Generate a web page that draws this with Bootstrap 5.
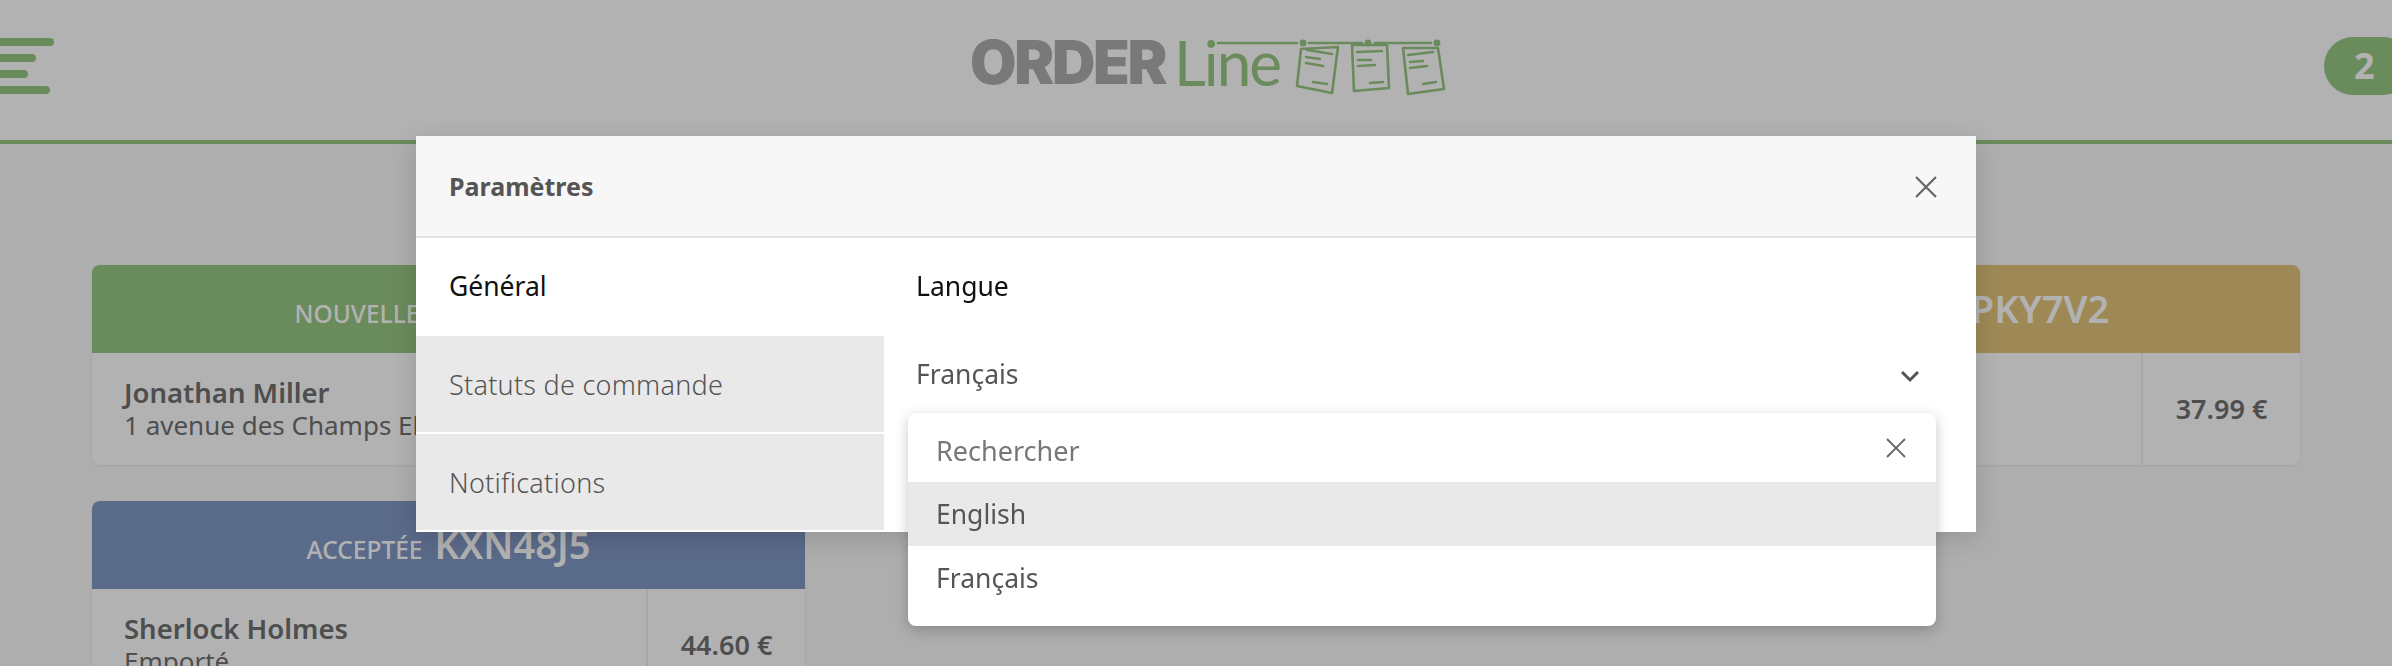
<!doctype html>
<html lang="fr">
<head>
<meta charset="utf-8">
<title>OrderLine</title>
<link rel="stylesheet" href="https://cdn.jsdelivr.net/npm/bootstrap@5.3.0/dist/css/bootstrap.min.css">
<style>
html,body{height:666px;overflow:hidden}
body{background:#fafafa;font-family:"Noto Sans","Open Sans",sans-serif;font-size:26px;color:#707070}
.top-bar{height:144px;background:#fff;border-bottom:4px solid #99c784;position:relative}
.burger{width:54px;padding-top:38px;gap:8px}
.burger span{display:block;height:8px;background:#99c784;border-radius:0 4px 4px 0}
.burger .b1{width:54px}.burger .b2{width:36px}.burger .b3{width:28px}.burger .b4{width:50px}
.brand{position:absolute;left:970px;top:24px;height:76px;white-space:nowrap}
.brand-a{font-family:Inter,sans-serif;font-weight:900;font-size:60px;letter-spacing:-2.3px;color:#aeaeae;line-height:76px;width:204px}
.brand-b{font-family:Lato,sans-serif;font-weight:400;font-size:62px;color:#99c784;line-height:76px;letter-spacing:-2px}
.brand svg{position:absolute;left:235px;top:11px}
.count-pill{position:absolute;right:-20px;top:37px;width:88px;height:58px;border-radius:29px;background:#99c784;color:#fff;font-weight:700;font-size:36px;line-height:58px;padding-left:30px}
.board{padding:121px 92px 0;gap:34.5px}
.board-col{flex:1 1 0;min-width:0;gap:36px}
.order{border-radius:8px;background:#fff;box-shadow:0 1px 3px rgba(0,0,0,.08);overflow:hidden}
.order-head{height:88px;color:#fff}
.order-head>div{gap:12px;font-weight:500;font-size:24.5px}
.order-head b{font-size:38px;font-weight:600;line-height:44px}
.head-green{background:#99c784}.head-blue{background:#8199c5}.head-gold{background:#e2c57c}
.head-gold span{letter-spacing:-1.6px}
.order-info{flex:1;padding:24px 32px;line-height:32px;min-width:0;white-space:nowrap;overflow:hidden;font-size:26px}
.order-info strong{font-weight:600;display:block;font-size:27.5px}
.order-price{width:159px;border-left:2px solid #f0f0f0;font-weight:600;font-size:27px}
.dim{background:rgba(0,0,0,.3);z-index:1040;opacity:1}
.dlg{position:absolute;left:416px;top:136px;width:1560px;z-index:1050;background:#fff;box-shadow:0 6px 24px rgba(0,0,0,.15)}
.dlg-head{height:102px;background:#f7f7f7;border-bottom:2px solid #e2e2e2;padding:2px 34px 0 33px;color:#555;font-weight:700;font-size:25px}
.x-btn{width:32px;height:32px;color:#666}
.tabs{width:468px}
.tab-item{height:98px;padding:2px 33px 0;font-size:27px;letter-spacing:.25px;color:#555;background:#e9e9e9;font-weight:300;border-bottom:2px solid #fff}
.tab-item.on{background:#fff;color:#111;font-weight:400;font-size:26.5px;letter-spacing:0}
.pane{flex:1;position:relative;height:294px;padding:0 32px}
.pane-title{height:98px;color:#111;font-size:26.5px}
.pane-sel{height:78px;margin-right:21px;color:#555;font-size:26.5px}
.pane-sel svg{margin-top:4px}
.lang-menu{position:absolute;left:24px;top:175px;right:40px;height:213px;background:#fff;border-radius:8px;box-shadow:0 4px 14px rgba(0,0,0,.22);border:0;margin:0;padding:0;display:block}
.lang-search{height:69px;padding:0 28px 0 28px;color:#777;font-size:27px}
.lang-search span{padding-top:7px}
.lang-item{height:64px;padding:2px 28px 0;color:#555;font-size:26.5px}
.lang-item.hov{background:#e9e9e9}
</style>
</head>
<body>
<header class="top-bar">
  <div class="burger d-flex flex-column"><span class="b1"></span><span class="b2"></span><span class="b3"></span><span class="b4"></span></div>
  <div class="brand d-flex">
    <span class="brand-a">ORDER</span><span class="brand-b">Line</span>
    <svg width="245" height="65" viewBox="1205 35 245 65" fill="none" stroke="#99c784" stroke-width="2.6" stroke-linecap="round" stroke-linejoin="round">
      <g fill="#99c784" stroke="none"><circle cx="1303" cy="43" r="3.4"/><circle cx="1368" cy="43" r="3.4"/><circle cx="1437" cy="43" r="3.4"/></g>
      <path d="M1218 43H1297M1309 43H1362M1375 43H1431"/>
      <path d="M1301 49 1338 47 1332 93 1297 86Z"/>
      <path d="M1352 45 1387 45 1389 88 1354 91Z"/>
      <path d="M1403 48 1438 48 1444 89 1408 94Z"/>
      <path d="M1307 50 1332 54M1306 57 1320 59M1306 63 1323 66M1313 82 1327 84"/>
      <path d="M1357 52 1382 51M1358 60 1371 60M1358 66 1375 65M1370 83 1383 82"/>
      <path d="M1408 55 1433 52M1410 62 1423 61M1410 68 1427 66M1423 84 1436 82"/>
    </svg>
  </div>
  <div class="count-pill">2</div>
</header>

<main class="board d-flex">
  <div class="board-col d-flex flex-column">
    <section class="order">
      <div class="order-head head-green d-flex justify-content-center align-items-center"><div class="d-flex align-items-baseline"><span>NOUVELLE</span><b>R3TN8QZ</b></div></div>
      <div class="d-flex"><div class="order-info"><strong>Jonathan Miller</strong>1 avenue des Champs Elysées</div><div class="order-price d-flex align-items-center justify-content-center">29.50 €</div></div>
    </section>
    <section class="order">
      <div class="order-head head-blue d-flex justify-content-center align-items-center"><div class="d-flex align-items-baseline"><span>ACCEPTÉE</span><b>KXN48J5</b></div></div>
      <div class="d-flex"><div class="order-info"><strong>Sherlock Holmes</strong>Emporté</div><div class="order-price d-flex align-items-center justify-content-center">44.60 €</div></div>
    </section>
  </div>
  <div class="board-col"></div>
  <div class="board-col d-flex flex-column">
    <section class="order">
      <div class="order-head head-gold d-flex justify-content-center align-items-center"><div class="d-flex align-items-baseline"><span>EN PRÉPARATION</span><b>PKY7V2</b></div></div>
      <div class="d-flex"><div class="order-info"><strong>Client</strong>Emporté</div><div class="order-price d-flex align-items-center justify-content-center">37.99 €</div></div>
    </section>
  </div>
</main>

<div class="modal-backdrop dim"></div>

<div class="dlg" role="dialog">
  <div class="dlg-head d-flex align-items-center justify-content-between">
    <span>Paramètres</span>
    <svg class="x-btn" viewBox="0 0 32 32" fill="none" stroke="currentColor" stroke-width="2.2"><path d="M6 6 26 26M26 6 6 26"/></svg>
  </div>
  <div class="d-flex">
    <div class="tabs">
      <div class="tab-item on d-flex align-items-center">Général</div>
      <div class="tab-item d-flex align-items-center">Statuts de commande</div>
      <div class="tab-item d-flex align-items-center">Notifications</div>
    </div>
    <div class="pane">
      <div class="pane-title d-flex align-items-center">Langue</div>
      <div class="pane-sel d-flex align-items-center justify-content-between">
        <span>Français</span>
        <svg width="26" height="20" viewBox="0 0 26 20" fill="none" stroke="#555" stroke-width="3"><path d="M5 5 13 13 21 5"/></svg>
      </div>
      <div class="lang-menu dropdown-menu">
        <div class="lang-search d-flex align-items-center justify-content-between">
          <span>Rechercher</span>
          <svg width="24" height="24" viewBox="0 0 24 24" fill="none" stroke="#666" stroke-width="1.9"><path d="M3 3 21 21M21 3 3 21"/></svg>
        </div>
        <div class="lang-item hov d-flex align-items-center">English</div>
        <div class="lang-item d-flex align-items-center">Français</div>
      </div>
    </div>
  </div>
</div>
<script src="https://cdn.jsdelivr.net/npm/bootstrap@5.3.0/dist/js/bootstrap.bundle.min.js"></script>
</body>
</html>
